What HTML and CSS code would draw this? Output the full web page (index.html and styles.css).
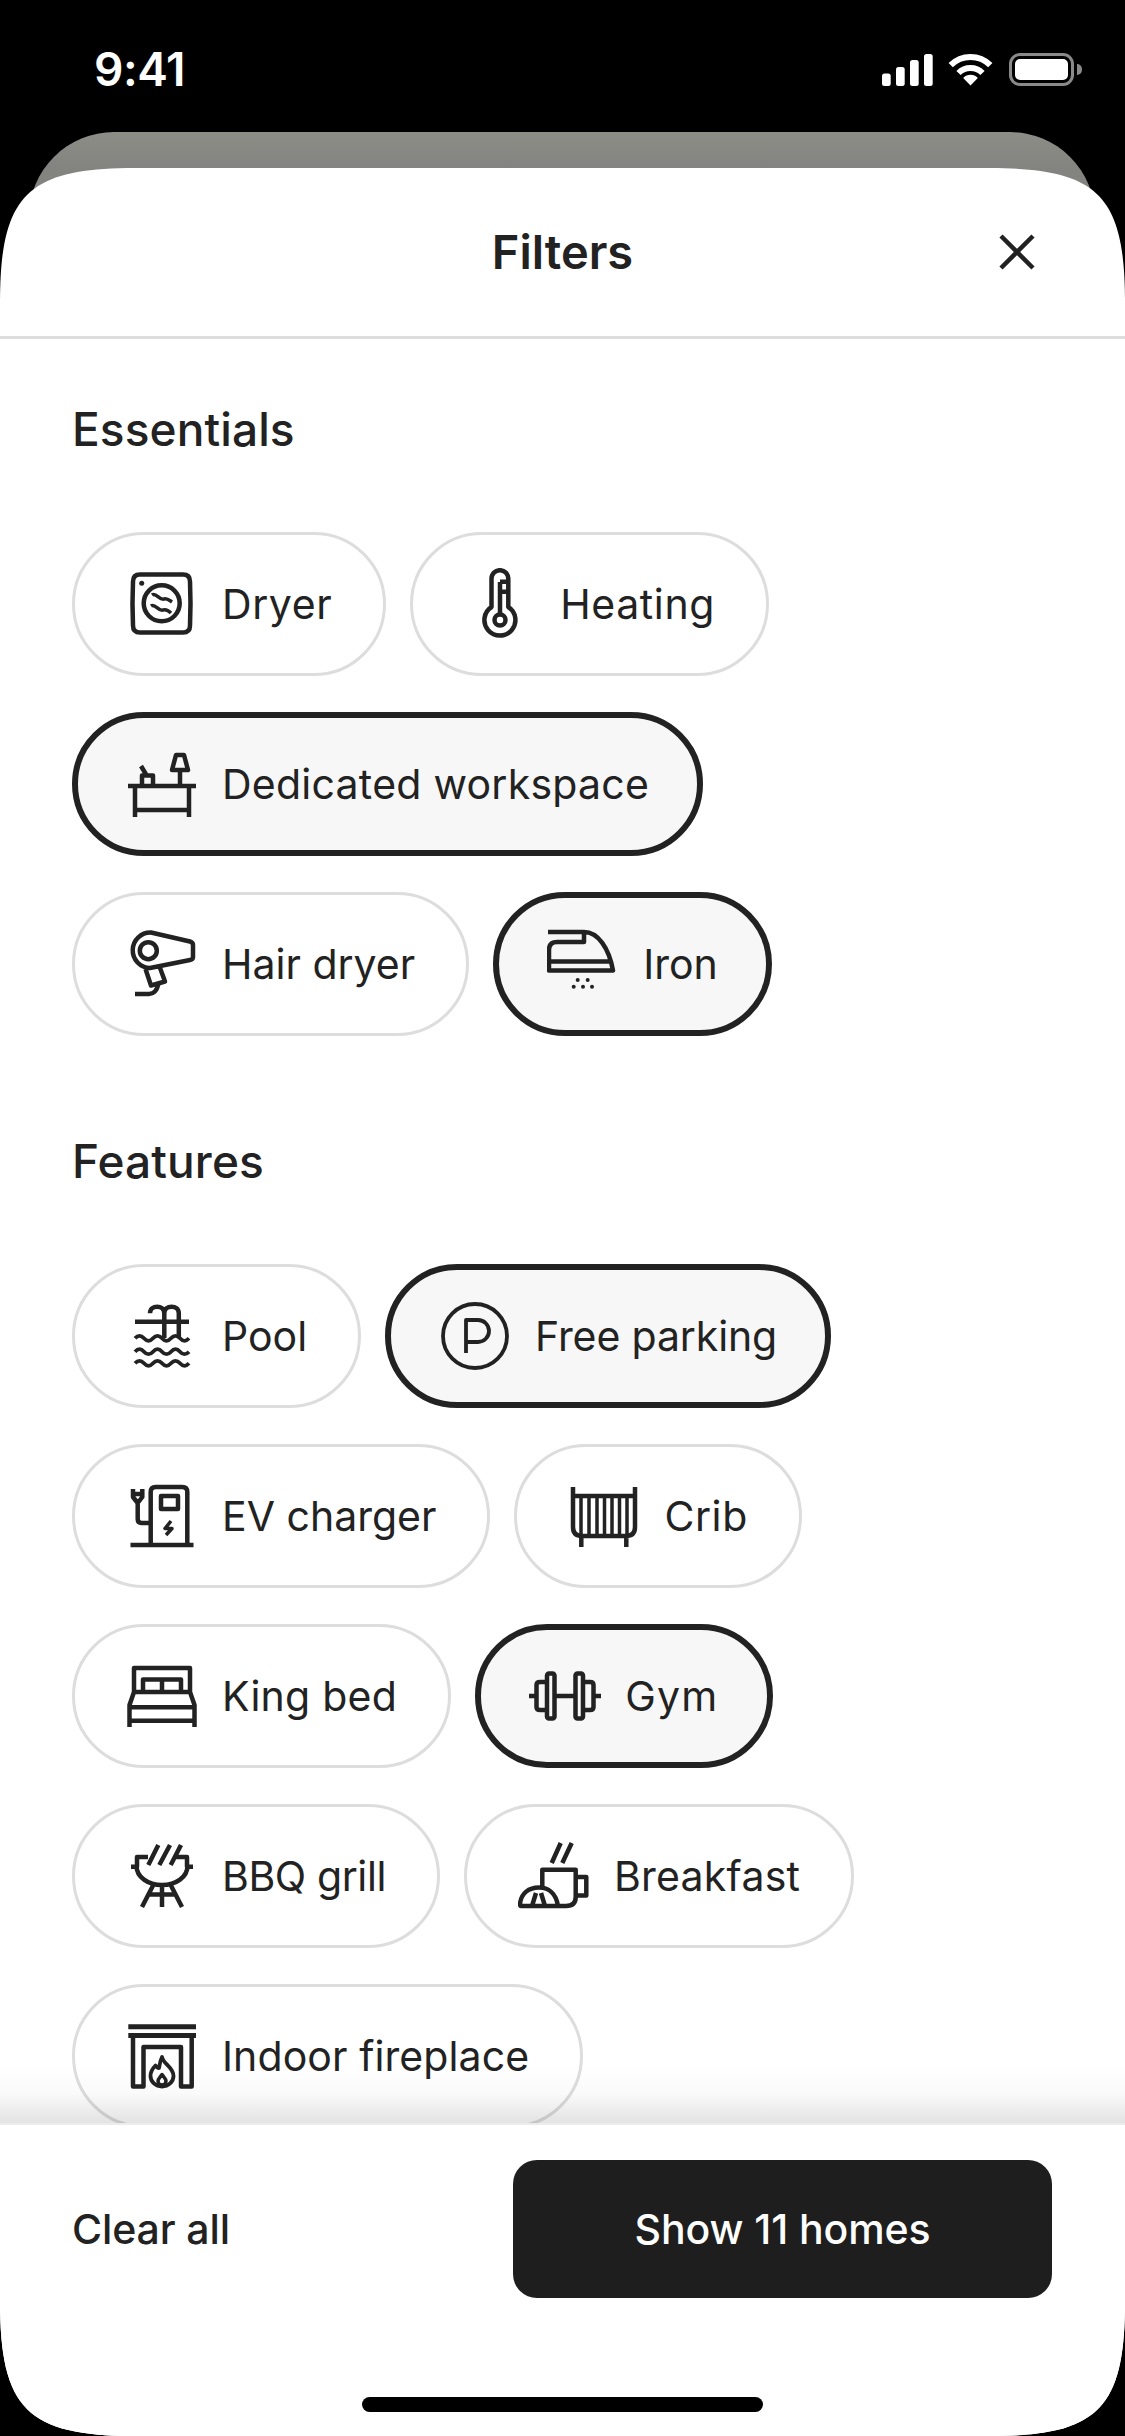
FILE: index.html
```html
<!DOCTYPE html>
<html lang="en">
<head>
<meta charset="utf-8">
<title>Filters</title>
<link rel="stylesheet" href="styles.css">
</head>
<body>
<div class="screen">
  <div class="backcard"></div>
  <header class="status">
    <span class="time">9:41</span>
    <div class="status-icons">
      <svg class="signal" viewBox="0 0 51 32"><rect x="0" y="19.5" width="8.7" height="12.5" rx="2.5"/><rect x="14" y="13" width="8.7" height="19" rx="2.5"/><rect x="28" y="6" width="8.7" height="26" rx="2.5"/><rect x="42" y="0" width="8.7" height="32" rx="2.5"/></svg>
      <svg class="wifi" viewBox="0 0 45 33"><path class="arc" d="M2.7 12.2A28 28 0 0 1 42.3 12.2"/><path class="arc" d="M10.5 20A17 17 0 0 1 34.5 20"/><path class="wedge" d="M22.5 32.5L15.2 25A10 10 0 0 1 29.8 25Z"/></svg>
      <div class="battery"><div class="battery-level"></div></div>
      <div class="battery-nub"></div>
    </div>
  </header>

  <main class="sheet">
    <div class="sheet-head">
      <span></span>
      <h1 class="sheet-title">Filters</h1>
      <svg class="close" viewBox="0 0 40 40"><path d="M4 4L36 36M36 4L4 36"/></svg>
    </div>

    <div class="content">
      <section class="group">
        <h2 class="group-title">Essentials</h2>
        <div class="pills">
          <div class="pill">
            <svg class="ico" viewBox="0 0 72 72"><path d="M14 6.5H57Q64 6.5 64 13.5Q65 35.5 64 57.5Q64 64.5 57 64.5H14Q7 64.5 7 57.5Q6 35.5 7 13.5Q7 6.5 14 6.5Z"/><circle cx="35.7" cy="35.3" r="18"/><circle class="solid" cx="15.7" cy="15.3" r="2.5"/><path class="thin" d="M26 27C30 24 34 33 38 31C41 30 43 32 46 34M25 38C29 35 33 44 37 42C40 41 43 43 45 45"/></svg>
            <span class="ls-a">Dryer</span>
          </div>
          <div class="pill">
            <svg class="ico" viewBox="0 0 72 72"><path d="M27.5 39V10.6a8.4 8.4 0 0 1 16.8 0V39a15.5 15.5 0 1 1-16.8 0Z"/><circle cx="36" cy="52" r="5.5"/><path d="M36 14V46M36 13.7H44.3M36 23.7H44.3"/></svg>
            <span class="ls-a">Heating</span>
          </div>
          <div class="pill selected">
            <svg class="ico" viewBox="0 0 72 72"><path d="M2 38H70M9 38V69M63 38V69M9 62H63M16 38V27.5H27V38M15 18L21 28M54 22V38M50 7H58L62 22H46Z"/></svg>
            <span class="ls-c">Dedicated workspace</span>
          </div>
          <div class="pill">
            <svg class="ico" viewBox="0 0 72 72"><circle cx="22.3" cy="22.7" r="8.5"/><path d="M25 4.5L64 13.5Q67 14.5 67 17V29Q67 31.5 64 32L24 40A17 17 0 1 1 25 4.5ZM19.5 41L25 57.5L39 53.5L33.5 38.5M32.5 56C31 62 28 66 23 66H9"/></svg>
            <span>Hair dryer</span>
          </div>
          <div class="pill selected">
            <svg class="ico" viewBox="0 0 72 72"><path d="M1 4H37C51 4 62 20 66 42.5H2V22Q2 14 10 14H37V4M2 33.5H64"/><circle class="solid" cx="30.7" cy="52" r="2"/><circle class="solid" cx="40.7" cy="52" r="2"/><circle class="solid" cx="26.7" cy="58.7" r="2"/><circle class="solid" cx="36" cy="58.7" r="2"/><circle class="solid" cx="45" cy="58.7" r="2"/></svg>
            <span>Iron</span>
          </div>
        </div>
      </section>

      <section class="group group-next">
        <h2 class="group-title">Features</h2>
        <div class="pills">
          <div class="pill">
            <svg class="ico" viewBox="0 0 72 72"><path d="M9 21.7H63M24 13.3C24 4.5 38.3 4.5 38.3 13.3V38M38.3 13.3C38.3 4.5 52.8 4.5 52.8 13.3V38"/><path class="wave" d="M9 38.3q4.5-5 9 0t9 0t9 0t9 0t9 0t9 0M9 51.7q4.5-5 9 0t9 0t9 0t9 0t9 0t9 0M9 63.3q4.5-5 9 0t9 0t9 0t9 0t9 0t9 0"/></svg>
            <span>Pool</span>
          </div>
          <div class="pill selected">
            <svg class="ico" viewBox="0 0 72 72"><circle class="mid" cx="36" cy="36" r="32"/><path class="mid" d="M27 53V20H39a11 11 0 0 1 0 22H27"/></svg>
            <span class="ls-d">Free parking</span>
          </div>
          <div class="pill">
            <svg class="ico" viewBox="0 0 72 72"><path d="M4.5 65H67.5M24.7 65V12Q24.7 7 29.7 7H56.3Q61.3 7 61.3 12V65M35 16H52V29H35ZM7 9V17L11.7 23L16.3 17V9M7 14H16.3M11.7 23V39Q11.7 43 15.7 43H24.7"/><path class="thin" d="M45 41L39 48.5H46L40 55"/></svg>
            <span>EV charger</span>
          </div>
          <div class="pill">
            <svg class="ico" viewBox="0 0 72 72"><path d="M5 7V47Q5 56 14 56H58Q67 56 67 47V7M5 16H67M13.3 56V67M58.3 56V67"/><path class="thin" d="M13 16V56M21 16V56M29 16V56M36.5 16V56M44 16V56M51.5 16V56M59 16V56"/></svg>
            <span class="ls-a">Crib</span>
          </div>
          <div class="pill">
            <svg class="ico" viewBox="0 0 72 72"><path d="M8 32V8H64V32M3.5 67V45L8 32H64L68.5 45V67M3.5 47.3H68.5M3.5 60.7H68.5M17 32V19.5H55V32M36 19.5V32"/></svg>
            <span class="ls-c">King bed</span>
          </div>
          <div class="pill selected">
            <svg class="ico" viewBox="0 0 72 72"><rect x="18" y="13.5" width="7.5" height="45" rx="2"/><rect x="46.5" y="13.5" width="7.5" height="45" rx="2"/><path d="M0 36H7.5M25.5 36H46.5M64.5 36H72M18 22H11Q7.5 22 7.5 25V47Q7.5 50 11 50H18M54 22H61Q64.5 22 64.5 25V47Q64.5 50 61 50H54"/></svg>
            <span class="ls-b">Gym</span>
          </div>
          <div class="pill">
            <svg class="ico" viewBox="0 0 72 72"><path d="M10.5 26C10.5 37 22 45 36 45C50 45 61.5 37 61.5 26M22 17H11V26.7H5M50 17H61V26.7H67M32.3 5L22.3 25M44 5L33.3 25M55 5L44.7 25M27.3 45L16 67M44.7 45L56 67M36 45V67M21 54.5H51"/></svg>
            <span class="ls-n">BBQ grill</span>
          </div>
          <div class="pill">
            <svg class="ico" viewBox="0 0 72 72"><path d="M24.3 47V29.7H57.7V57Q57.7 66 48 66H3Q2 66 2 64C3 53 11 47.5 21 47.5C30 47.5 38 53 40 66M57.7 37H68.3V55.5H57.7M33.7 23L42.7 3M44.3 23L53.7 3M14 66L18 53M27 66L23 53"/></svg>
            <span class="ls-c">Breakfast</span>
          </div>
          <div class="pill">
            <svg class="ico" viewBox="0 0 72 72"><path class="heavy" d="M2.3 6.8H70M2.3 15.5H70"/><path d="M7 15V66.5H17.5V27H55V66.5H65.7V15"/><path class="mid" d="M36 37C37 44 47.5 47 47.5 56A11.5 10.5 0 0 1 24.5 56C24.5 51 27 48 29.5 45.5C31 48 32 48 33 48C34 44 34 41 36 37Z"/><path class="thin" d="M36 54.5C38 57.5 40 58.5 40 61A4 4 0 0 1 32 61C32 58.5 34 57.5 36 54.5Z"/></svg>
            <span class="ls-e">Indoor fireplace</span>
          </div>
        </div>
      </section>
    </div>

    <footer class="footer">
      <div class="footer-row">
        <span class="clear">Clear all</span>
        <div class="show">Show 11 homes</div>
      </div>
      <div class="home-indicator"></div>
    </footer>
  </main>
</div>
</body>
</html>
```

FILE: styles.css
```css
* { box-sizing: border-box; }
html, body { margin: 0; padding: 0; background: #000; }
body { font-family: "Inter", "Liberation Sans", sans-serif; color: #222; }

.screen { position: relative; width: 1125px; height: 2436px; overflow: hidden; background: #000; }

.backcard {
  position: absolute; left: 29px; right: 30px; top: 132px; bottom: 0;
  border-radius: 85px;
  background: linear-gradient(#8d8d88 0, #83837f 36px, #83837f 60px, #9a9a98 100%);
}

.status {
  position: relative; height: 168px; padding: 0 43px 0 94px;
  display: flex; justify-content: space-between; align-items: flex-start; color: #fff;
}
.time { margin-top: 43px; font-size: 46px; line-height: 52px; font-weight: 600; letter-spacing: -0.4px; }
.status-icons { display: flex; align-items: center; margin-top: 52px; height: 34px; }
.signal { width: 51px; height: 32px; fill: #fff; margin-top: 1px; }
.wifi { width: 45px; height: 33px; margin-left: 15px; }
.wifi .arc { fill: none; stroke: #fff; stroke-width: 6px; }
.wifi .wedge { fill: #fff; }
.battery { width: 65px; height: 33px; margin-left: 16px; border: 3px solid #8a8a8a; border-radius: 11px; padding: 3px; }
.battery-level { width: 100%; height: 100%; background: #fff; border-radius: 5px; }
.battery-nub { width: 5px; height: 11px; margin-left: 3px; background: #8a8a8a; border-radius: 0 5px 5px 0; }

.sheet {
  position: relative; height: 2268px; background: #fff; display: flex; flex-direction: column;
  clip-path: path("M0 135C0 27 27 0 135 0H990C1098 0 1125 27 1125 135V2133C1125 2241 1098 2268 990 2268H135C27 2268 0 2241 0 2133Z");
}
.sheet-head {
  flex: none; height: 171px; border-bottom: 3px solid #ddd;
  display: grid; grid-template-columns: 1fr auto 1fr; align-items: center; padding: 0 88px 0 0;
}
.sheet-title { margin: 0 0 0 88px; font-size: 47px; line-height: 54px; font-weight: 600; letter-spacing: 0; }
.close { justify-self: end; width: 40px; height: 40px; fill: none; stroke: #222; stroke-width: 4.5px; }

.content { flex: 1; min-height: 0; overflow: hidden; padding: 63px 72px 0; }
.group-title { margin: 0 0 76px; font-size: 46px; line-height: 54px; font-weight: 500; letter-spacing: 0.1px; }
.group-next { margin-top: 98px; }
.pills { display: flex; flex-wrap: wrap; gap: 36px 24px; }

.pill {
  height: 144px; padding: 0 51px; border: 3px solid #ddd; border-radius: 72px; background: #fff;
  display: flex; align-items: center; gap: 24px; font-size: 41px; line-height: 50px; white-space: nowrap;
}
.pill.selected { padding: 0 48px; border: 6px solid #222; background: #f7f7f7; }
.ls-a { letter-spacing: 0.6px; }
.ls-b { letter-spacing: 1.3px; }
.ls-c { letter-spacing: 0.25px; }
.ls-d { letter-spacing: -0.12px; }
.ls-e { letter-spacing: 0.1px; }
.ls-n { letter-spacing: -0.4px; }

.ico { flex: none; width: 72px; height: 72px; fill: none; stroke: #222; stroke-width: 4.5px; stroke-linejoin: round; }
.ico .solid { fill: #222; stroke: none; }
.ico .thin { stroke-width: 3.5px; }
.ico .mid { stroke-width: 3.8px; }
.ico .wave { stroke-width: 3.8px; }
.ico .heavy { stroke-width: 5px; }

.footer { position: relative; flex: none; height: 313px; padding-top: 35px; background: #fff; border-top: 2px solid #ececec; display: flex; flex-direction: column; align-items: center; }
.footer::before {
  content: ""; position: absolute; left: 0; right: 0; top: -62px; height: 60px;
  background: linear-gradient(rgba(0,0,0,0), rgba(0,0,0,0.02) 50%, rgba(0,0,0,0.11));
}
.footer-row { width: 100%; padding: 0 73px 0 72px; display: flex; justify-content: space-between; align-items: center; }
.clear { font-size: 41px; line-height: 50px; font-weight: 500; letter-spacing: -0.1px; }
.show {
  width: 539px; height: 138px; border-radius: 24px; background: #1e1e1e; color: #fff;
  display: flex; align-items: center; justify-content: center;
  font-size: 41px; font-weight: 500; letter-spacing: -0.1px;
}
.home-indicator { width: 401px; height: 15px; margin-top: 99px; background: #000; border-radius: 8px; }
```
